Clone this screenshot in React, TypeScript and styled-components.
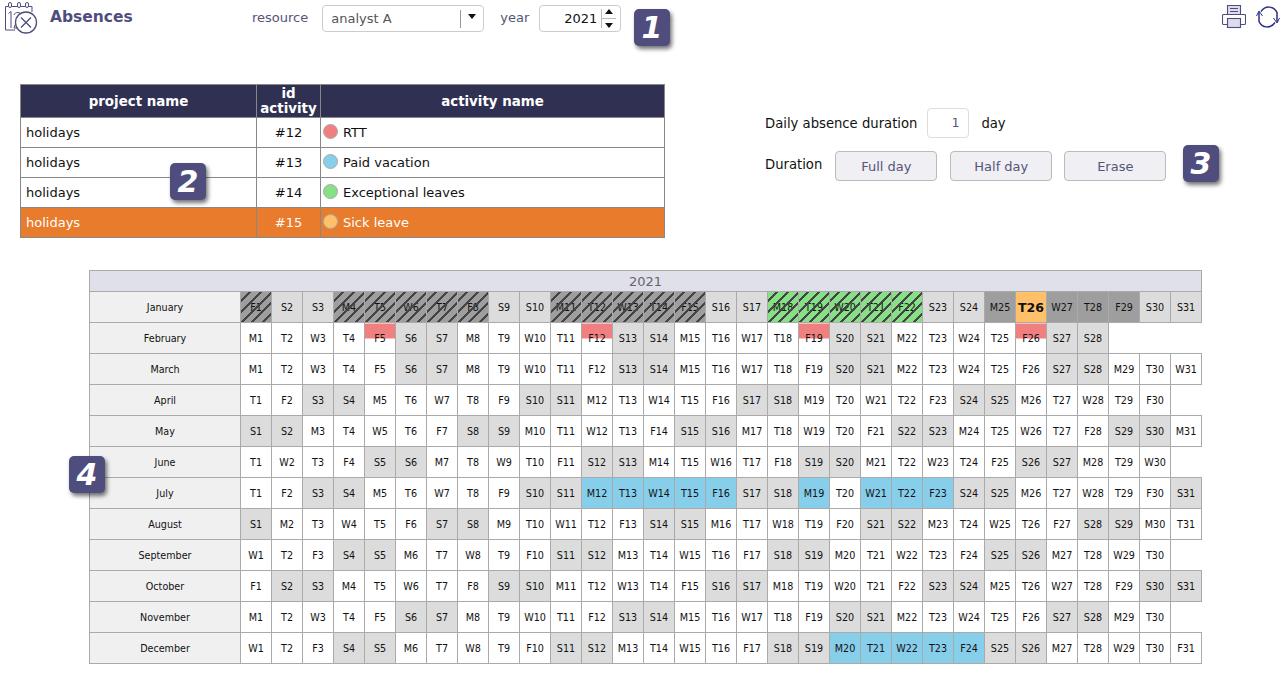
import React from 'react'
import styled, { createGlobalStyle, css } from 'styled-components'

const GlobalStyle = createGlobalStyle`
  html, body {
    margin: 0;
    padding: 0;
    background: #fff;
    font-family: "DejaVu Sans", Verdana, sans-serif;
    font-size: 13px;
    color: #111;
  }
`

const Page = styled.div`
  position: relative;
  width: 1287px;
  height: 689px;
  overflow: hidden;
`
const Header = styled.header`
  display: flex;
  align-items: flex-start;
  height: 84px;
  padding: 2px 7px 0 5px;
  box-sizing: border-box;
`
const Title = styled.h1`
  margin: 5px 0 0 12px;
  width: 202px;
  font-size: 15.5px;
  line-height: 20px;
  font-weight: bold;
  color: #4f4d7d;
`
const Filters = styled.div`
  display: flex;
  align-items: center;
  height: 27px;
  margin-top: 3px;
`
const FilterLabel = styled.span<{ $gap: number }>`
  color: #555577;
  font-size: 13px;
  margin-right: ${({ $gap }) => $gap}px;
  position: relative;
  top: -1px;
`
const Select = styled.div`
  display: flex;
  align-items: center;
  width: 160px;
  height: 25px;
  border: 1px solid #ccc;
  border-radius: 4px;
  margin-right: 16px;
  color: #555;
  font-size: 13px;
`
const SelectValue = styled.span`
  flex: 1;
  padding-left: 8px;
`
const SelectArrow = styled.span`
  display: flex;
  justify-content: center;
  width: 22px;
  padding-top: 4px;
  height: 14px;
  border-left: 1px solid #999;
`
const Arrow = styled.i<{ $up?: boolean }>`
  display: block;
  width: 0;
  height: 0;
  border-left: 4px solid transparent;
  border-right: 4px solid transparent;
  ${({ $up }) => ($up ? 'border-bottom: 5px solid #111;' : 'border-top: 5px solid #111;')}
`
const Spinner = styled.div`
  display: flex;
  align-items: center;
  justify-content: flex-end;
  width: 80px;
  height: 25px;
  border: 1px solid #ccc;
  border-radius: 4px;
  font-size: 13px;
  color: #111;
`
const SpinArrows = styled.span`
  display: flex;
  flex-direction: column;
  align-items: center;
  justify-content: space-between;
  height: 19px;
  width: 14px;
  margin: 0 4px 0 4px;
  border-left: 1px solid #bbb;
  position: relative;
  &::after {
    content: '';
    position: absolute;
    left: 0;
    right: 0;
    top: 9px;
    border-top: 1px solid #bbb;
  }
`
const Tools = styled.div`
  display: flex;
  gap: 10px;
  margin-left: auto;
  margin-top: 3px;
`
const Badge = styled.div<{ $x: number; $y: number }>`
  position: absolute;
  left: ${({ $x }) => $x}px;
  top: ${({ $y }) => $y}px;
  width: 36px;
  height: 37px;
  border-radius: 5px;
  background: #4f4d7d;
  box-shadow: 2px 3px 4px rgba(0, 0, 0, 0.55);
  color: #fff;
  display: flex;
  align-items: center;
  justify-content: center;
  font-family: "DejaVu Sans", Verdana, sans-serif;
  font-style: italic;
  font-weight: bold;
  font-size: 30px;
  line-height: 1;
`
const Middle = styled.div`
  display: flex;
  align-items: flex-start;
  height: 186px;
  padding-left: 20px;
`
const ActivityTable = styled.table`
  border-collapse: collapse;
  table-layout: fixed;
  width: 644px;
  font-size: 13px;
  th {
    background: #303052;
    color: #fff;
    font-weight: bold;
    font-size: 13.4px;
    line-height: 15px;
    height: 32px;
    padding: 0;
    border: 1px solid #888;
  }
  td {
    height: 29px;
    padding: 0;
    border: 1px solid #888;
  }
`
const ActivityRow = styled.tr<{ $selected?: boolean }>`
  background: ${({ $selected }) => ($selected ? '#e87b2c' : '#fff')};
  color: ${({ $selected }) => ($selected ? '#fff' : '#111')};
`
const ProjectCell = styled.td`
  padding-left: 5px !important;
`
const IdCell = styled.td`
  text-align: center;
`
const NameCell = styled.td`
  padding-left: 2px !important;
`
const NameWrap = styled.div`
  display: flex;
  align-items: center;
  gap: 5px;
`
const Dot = styled.span<{ $color: string }>`
  display: block;
  width: 13px;
  height: 13px;
  border-radius: 50%;
  border: 1px solid #aaa;
  background: ${({ $color }) => $color};
  position: relative;
  top: -1px;
`
const Options = styled.div`
  margin-left: 100px;
  padding-top: 24px;
  font-size: 13.2px;
`
const OptionRow = styled.div`
  display: flex;
  align-items: center;
`
const DurationInput = styled.div`
  width: 42px;
  height: 30px;
  border: 1px solid #ddd;
  border-radius: 4px;
  margin: 0 12px 0 10px;
  display: flex;
  align-items: center;
  justify-content: flex-end;
  padding-right: 9px;
  box-sizing: border-box;
  color: #4f4d7d;
  font-size: 12px;
`
const DurationRow = styled(OptionRow)`
  margin-top: 13px;
`
const DurationLabel = styled.span`
  margin-bottom: 4px;
`
const ChoiceButton = styled.button<{ $gap: number }>`
  width: 102px;
  height: 30px;
  margin-left: ${({ $gap }) => $gap}px;
  padding: 0;
  border: 1px solid #bbb;
  border-radius: 4px;
  background: #efeff4;
  color: #55557a;
  font-family: inherit;
  font-size: 13px;
`
const CalendarWrap = styled.div`
  padding-left: 89px;
`
const Calendar = styled.table`
  border-collapse: collapse;
  table-layout: fixed;
  width: 1113px;
  font-size: 9.6px;
  color: #111;
  td, th {
    border: 1px solid #aaa;
    padding: 0;
    text-align: center;
    overflow: hidden;
    white-space: nowrap;
  }
`
const YearCell = styled.th`
  height: 20px;
  background: #e0e0ea;
  color: #666;
  font-size: 13px;
  font-weight: normal;
`
const MonthCell = styled.td`
  height: 30px;
  background: #f0f0f0;
`

type Kind = 'plain' | 'weekend' | 'hatch' | 'hatchGreen' | 'worked' | 'today' | 'half' | 'vacation'

const hatched = css`
  position: relative;
  &::after {
    content: '';
    position: absolute;
    inset: 0;
    background: repeating-linear-gradient(135deg, transparent 0 5.4px, #444 5.4px 7.6px);
  }
`

const DayCell = styled.td<{ $kind: Kind }>`
  background: ${({ $kind }) => {
    switch ($kind) {
      case 'weekend':
        return '#dcdcdc'
      case 'worked':
      case 'hatch':
        return '#9e9e9e'
      case 'today':
        return '#ffc069'
      case 'vacation':
        return '#87ceeb'
      case 'half':
        return 'linear-gradient(#f08080 0 15px, #fff 15px)'
      case 'hatchGreen':
        return '#87e085'
      default:
        return '#fff'
    }
  }};
  ${({ $kind }) => $kind === 'today' && 'font-size: 12.5px; font-weight: bold;'}
  ${({ $kind }) => ($kind === 'hatch' || $kind === 'hatchGreen') && hatched}
`

const MONTHS = ['January', 'February', 'March', 'April', 'May', 'June', 'July', 'August', 'September', 'October', 'November', 'December']
const LETTERS = ['S', 'M', 'T', 'W', 'T', 'F', 'S']

const ABSENCES: Record<string, Kind> = {}
const addRange = (month: number, days: number[], kind: Kind) => days.forEach((d) => (ABSENCES[`${month}-${d}`] = kind))
addRange(0, [1, 4, 5, 6, 7, 8, 11, 12, 13, 14, 15], 'hatch')
addRange(0, [18, 19, 20, 21, 22], 'hatchGreen')
addRange(0, [25, 27, 28, 29], 'worked')
addRange(0, [26], 'today')
addRange(1, [5, 12, 19, 26], 'half')
addRange(6, [12, 13, 14, 15, 16, 19, 21, 22, 23], 'vacation')
addRange(11, [20, 21, 22, 23, 24], 'vacation')

const activities = [
  { id: '#12', name: 'RTT', color: '#f08080' },
  { id: '#13', name: 'Paid vacation', color: '#87ceeb' },
  { id: '#14', name: 'Exceptional leaves', color: '#87e085' },
  { id: '#15', name: 'Sick leave', color: '#ffc069', selected: true },
]

const LogoIcon = () => (
  <svg width="33" height="32" viewBox="0 0 33 32" fill="none" stroke="#4f4d7d" strokeWidth="1">
    <path d="M.5 28V4.500H3.500M6.500 4.500h6M15.500 4.500h5M23.500 4.500h3.500V10" />
    <rect x="3.500" y=".5" width="3" height="5" rx="1.500" />
    <rect x="12.500" y=".5" width="3" height="5" rx="1.500" />
    <rect x="20.500" y=".5" width="3" height="5" rx="1.500" />
    <path d="M.5 28H10" />
    <path d="M3.500 11.500l2.500-2V26M9 13c1-3.500 7-3.500 7 .5 0 3.500-6 7-7 12.500h7" />
    <circle cx="21" cy="20.500" r="10.500" strokeWidth="1.300" fill="#fff" />
    <path d="M16 15.500l10 10M26 15.500l-10 10" strokeWidth="1.300" />
  </svg>
)

const PrintIcon = () => (
  <svg width="24" height="24" viewBox="0 0 24 24" fill="none" stroke="#4f4d7d" strokeWidth="1.100">
    <path d="M5.500 10V.5h13V10" fill="#dcdcec" />
    <path d="M8 3.500h8M8 6.500h8" />
    <rect x=".5" y="9.500" width="23" height="10" rx="1" />
    <rect x="5.500" y="13.500" width="13" height="9" fill="#dcdcec" />
  </svg>
)

const RefreshIcon = () => (
  <svg width="24" height="24" viewBox="0 0 24 24" fill="none" stroke="#2f2f8a" strokeWidth="1.500">
    <path d="M5 6.500C9 .5 18 .5 21 7.500V17" />
    <path d="M17.500 13l3.500 5 2.500-5" strokeWidth="1" />
    <path d="M19 17.500C15 23.500 6 23.500 3 16.500V7" />
    <path d="M.5 11L3 6l3.500 5" strokeWidth="1" />
  </svg>
)

const CalendarRow = ({ month }: { month: number }) => {
  const count = new Date(2021, month + 1, 0).getDate()
  const days = Array.from({ length: count }, (_, i) => i + 1)
  return (
    <tr>
      <MonthCell>{MONTHS[month]}</MonthCell>
      {days.map((day) => {
        const weekday = new Date(2021, month, day).getDay()
        const off = weekday === 0 || weekday === 6
        const kind = ABSENCES[`${month}-${day}`] ?? (off ? 'weekend' : 'plain')
        return (
          <DayCell key={day} $kind={kind}>
            {LETTERS[weekday]}
            {day}
          </DayCell>
        )
      })}
    </tr>
  )
}

const App = () => {
  return (
    <Page>
      <GlobalStyle />
      <Header>
        <LogoIcon />
        <Title>Absences</Title>
        <Filters>
          <FilterLabel $gap={14}>resource</FilterLabel>
          <Select>
            <SelectValue>analyst A</SelectValue>
            <SelectArrow>
              <Arrow />
            </SelectArrow>
          </Select>
          <FilterLabel $gap={10}>year</FilterLabel>
          <Spinner>
            2021
            <SpinArrows>
              <Arrow $up />
              <Arrow />
            </SpinArrows>
          </Spinner>
        </Filters>
        <Tools>
          <PrintIcon />
          <RefreshIcon />
        </Tools>
      </Header>
      <Middle>
        <ActivityTable>
          <colgroup>
            <col width="236" />
            <col width="64" />
            <col width="344" />
          </colgroup>
          <thead>
            <tr>
              <th>project name</th>
              <th>
                id
                <br />
                activity
              </th>
              <th>activity name</th>
            </tr>
          </thead>
          <tbody>
            {activities.map((a) => (
              <ActivityRow key={a.id} $selected={a.selected}>
                <ProjectCell>holidays</ProjectCell>
                <IdCell>{a.id}</IdCell>
                <NameCell>
                  <NameWrap>
                    <Dot $color={a.color} />
                    {a.name}
                  </NameWrap>
                </NameCell>
              </ActivityRow>
            ))}
          </tbody>
        </ActivityTable>
        <Options>
          <OptionRow>
            Daily absence duration
            <DurationInput>1</DurationInput>
            day
          </OptionRow>
          <DurationRow>
            <DurationLabel>Duration</DurationLabel>
            <ChoiceButton $gap={13}>Full day</ChoiceButton>
            <ChoiceButton $gap={13}>Half day</ChoiceButton>
            <ChoiceButton $gap={12}>Erase</ChoiceButton>
          </DurationRow>
        </Options>
      </Middle>
      <CalendarWrap>
        <Calendar>
          <colgroup>
            <col width="151" />
            {Array.from({ length: 31 }, (_, i) => (
              <col key={i} width="31" />
            ))}
          </colgroup>
          <thead>
            <tr>
              <YearCell colSpan={32}>2021</YearCell>
            </tr>
          </thead>
          <tbody>
            {MONTHS.map((_, month) => (
              <CalendarRow key={month} month={month} />
            ))}
          </tbody>
        </Calendar>
      </CalendarWrap>
      <Badge $x={634} $y={9}>1</Badge>
      <Badge $x={170} $y={163}>2</Badge>
      <Badge $x={1183} $y={145}>3</Badge>
      <Badge $x={69} $y={456}>4</Badge>
    </Page>
  )
}

export default App
